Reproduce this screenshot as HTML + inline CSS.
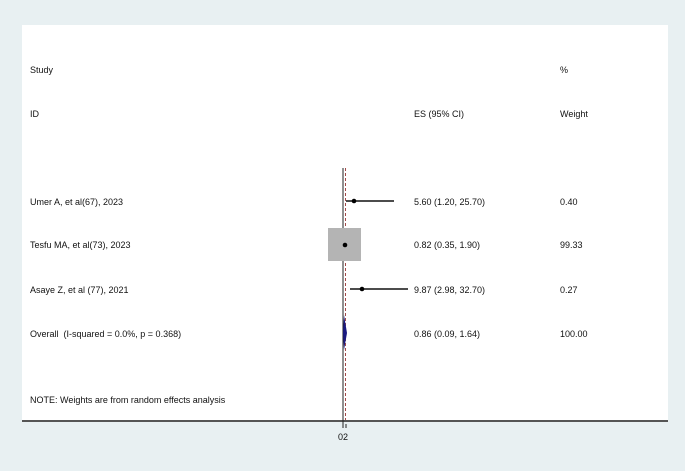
<!DOCTYPE html>
<html><head><style>
body{margin:0;width:685px;height:471px;background:#e8f0f2;position:relative;font-family:"Liberation Sans",sans-serif;font-size:9px;color:#111;overflow:hidden}
.p{position:absolute;left:22px;top:25px;width:646px;height:396px;background:#fff}
.t{position:absolute;white-space:nowrap;line-height:10px}
</style></head><body>
<div class="p"></div>
<div class="t" style="left:30px;top:65px">Study</div>
<div class="t" style="left:30px;top:109px">ID</div>
<div class="t" style="left:414px;top:109px">ES (95% CI)</div>
<div class="t" style="left:560px;top:65px">%</div>
<div class="t" style="left:560px;top:109px">Weight</div>
<div class="t" style="left:30px;top:197px">Umer A, et al(67), 2023</div>
<div class="t" style="left:414px;top:197px">5.60 (1.20, 25.70)</div>
<div class="t" style="left:560px;top:197px">0.40</div>
<div class="t" style="left:30px;top:240px">Tesfu MA, et al(73), 2023</div>
<div class="t" style="left:414px;top:240px">0.82 (0.35, 1.90)</div>
<div class="t" style="left:560px;top:240px">99.33</div>
<div class="t" style="left:30px;top:285px">Asaye Z, et al (77), 2021</div>
<div class="t" style="left:414px;top:285px">9.87 (2.98, 32.70)</div>
<div class="t" style="left:560px;top:285px">0.27</div>
<div class="t" style="left:30px;top:329px">Overall &nbsp;(I-squared = 0.0%, p = 0.368)</div>
<div class="t" style="left:414px;top:329px">0.86 (0.09, 1.64)</div>
<div class="t" style="left:560px;top:329px">100.00</div>
<div class="t" style="left:30px;top:395px">NOTE: Weights are from random effects analysis</div>
<div class="t" style="left:338px;top:432px">02</div>
<svg width="685" height="471" style="position:absolute;left:0;top:0">
<rect x="22" y="420" width="646" height="2" fill="#555"/>
<line x1="343" y1="168" x2="343" y2="428" stroke="#222" stroke-width="1"/>
<line x1="345.5" y1="168" x2="345.5" y2="420" stroke="#a04848" stroke-width="1" stroke-dasharray="3,2"/>
<line x1="346" y1="428" x2="346" y2="424" stroke="#222"/>
<rect x="328" y="228" width="33" height="33" fill="#b4b4b4"/>
<line x1="346" y1="201" x2="394" y2="201" stroke="#111" stroke-width="1.5"/>
<circle cx="354" cy="201" r="2.3" fill="#000"/>
<circle cx="345" cy="245" r="2.3" fill="#000"/>
<line x1="350" y1="289" x2="408" y2="289" stroke="#111" stroke-width="1.5"/>
<circle cx="362" cy="289" r="2.3" fill="#000"/>
<polygon points="344,315 347,333 344,350 343,333" fill="#1a1a80"/>
</svg>
</body></html>
